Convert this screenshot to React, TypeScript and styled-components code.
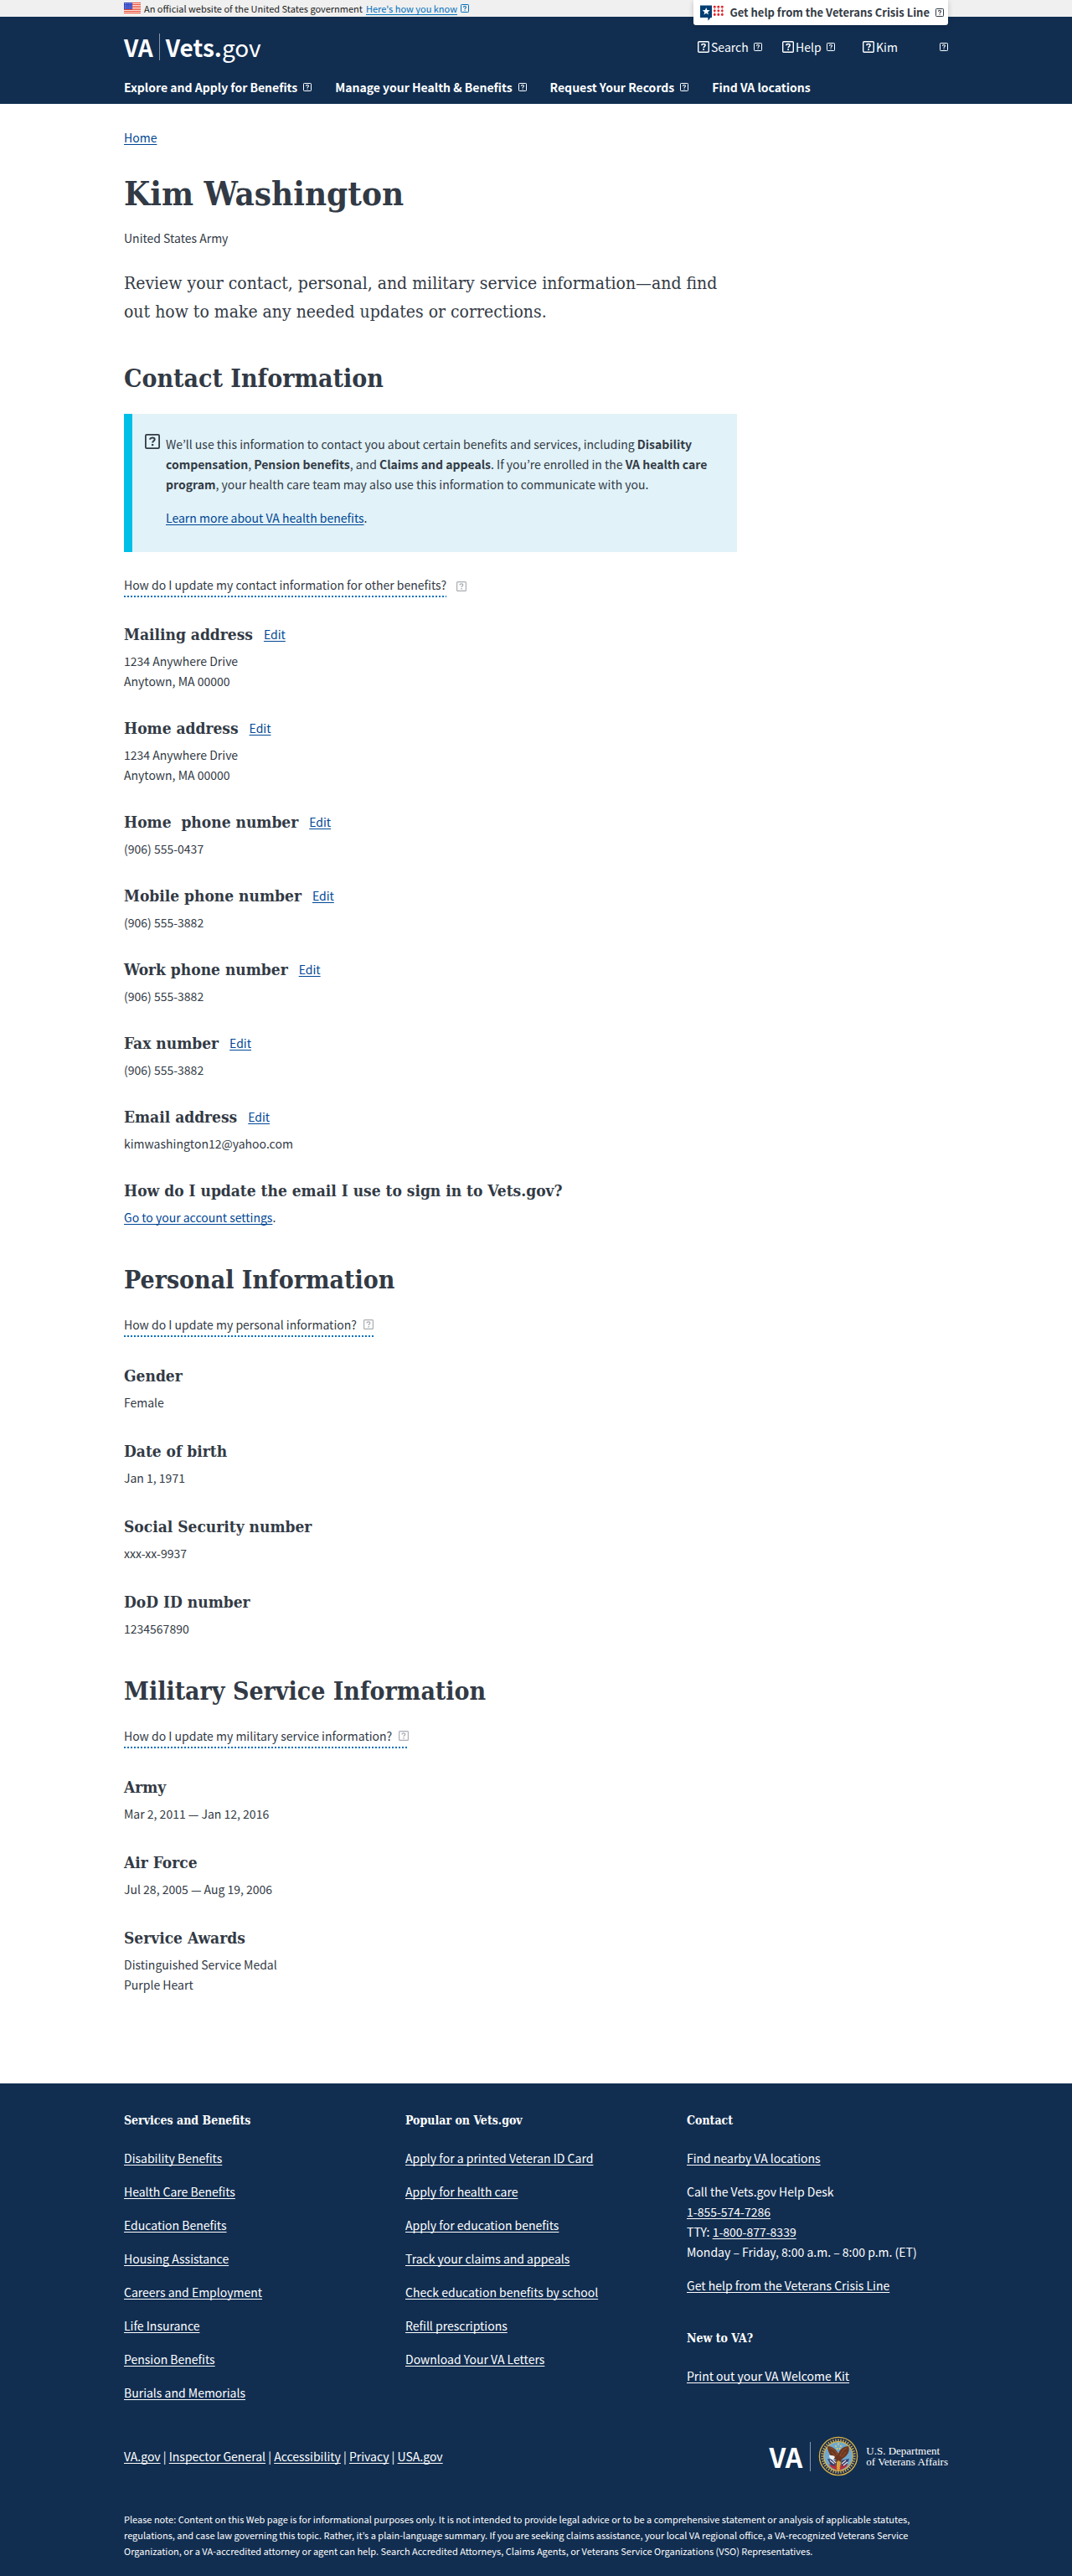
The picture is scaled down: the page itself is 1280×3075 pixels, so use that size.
import React from "react";
import styled, { createGlobalStyle, css } from "styled-components";

const sans = `"Noto Sans CJK JP", "Noto Sans CJK SC", "Open Sans", sans-serif`;
const slab = `"DejaVu Serif Condensed", "DejaVu Serif", serif`;
const navy = "#112e51";
const ink = "#323a45";
const linkBlue = "#004795";

const GlobalStyle = createGlobalStyle`
  *, *::before, *::after { box-sizing: border-box; }
  body {
    margin: 0;
    background: #fff;
    color: ${ink};
    font: 14px/24px ${sans};
  }
  h1, h2, h3, h4, p, ul { margin: 0; padding: 0; }
  ul { list-style: none; }
  button { border: 0; background: none; padding: 0; font: inherit; color: inherit; cursor: pointer; }
`;

const Container = styled.div`
  position: relative;
  max-width: 1024px;
  margin: 0 auto;
  padding: 0 20px;
`;

const Link = styled.a<{ $color?: string }>`
  color: ${(p) => p.$color ?? linkBlue};
  text-decoration: underline;
  text-decoration-thickness: 1px;
  text-underline-offset: 2px;
  text-decoration-skip-ink: none;
`;

/* ---------- icons ---------- */

const IconSvg = styled.svg`
  display: block;
  flex: none;
`;

function BoxIcon({ size = 10 }: { size?: number }) {
  return (
    <IconSvg width={size} height={size} viewBox="0 0 20 20" fill="none" stroke="currentColor" aria-hidden="true">
      <rect x="1" y="1" width="18" height="18" rx="1.5" strokeWidth="2" />
      <path d="M7 7.6V6.2C7.8 5.3 8.8 4.9 10 4.9c1.8 0 3 .9 3 2.3 0 2-2.8 2-2.8 4.6" strokeWidth="2.2" />
      <path d="M8.9 14.5h2.5" strokeWidth="2.4" />
    </IconSvg>
  );
}

function FlagIcon() {
  return (
    <IconSvg width="20" height="14" viewBox="0 0 20 14" aria-hidden="true">
      <rect width="20" height="14" fill="#fff" />
      {[0, 2, 4, 6, 8, 10, 12].map((y) => (
        <rect key={y} y={y} width="20" height="1.1" fill="#e8492f" />
      ))}
      <rect width="10" height="8" fill="#2a3fc0" />
      {[1.5, 4, 6.5].map((y) =>
        [1.5, 3.8, 6.1, 8.4].map((x) => <circle key={`${x}-${y}`} cx={x} cy={y} r="0.55" fill="#fff" />)
      )}
    </IconSvg>
  );
}

function CrisisIcon() {
  return (
    <IconSvg width="28" height="19" viewBox="0 0 28 19" aria-hidden="true">
      <path d="M0 .5h14V15h-1.5L9.5 18.7 9.3 15H0z" fill="#003e73" />
      <path d="M7.2 3l1.2 3.1 3.3.2-2.6 2.1.9 3.2-2.8-1.8-2.8 1.8.9-3.2-2.6-2.1 3.3-.2z" fill="#fff" />
      {[2.2, 6.8, 11.5].map((y) =>
        [17.3, 21.8, 26.3].map((x) => <circle key={`${x}-${y}`} cx={x} cy={y} r="1.4" fill="#e31c24" />)
      )}
      {[4.5, 9.1].map((y) =>
        [17.3, 21.8, 26.3].map((x) => <circle key={`${x}-${y}`} cx={x} cy={y} r=".5" fill="#e31c24" />)
      )}
    </IconSvg>
  );
}

function SealIcon() {
  const ticks = Array.from({ length: 40 }, (_, i) => i * 9);
  return (
    <IconSvg width="48" height="48" viewBox="0 0 48 48" role="img" aria-label="Department seal">
      <circle cx="24" cy="24" r="23.5" fill="#1b2a4a" />
      <circle cx="24" cy="24" r="22.6" fill="none" stroke="#d9b548" strokeWidth="1.3" />
      {ticks.map((a) => (
        <path key={a} d="M24 3.3v2.7" stroke="#cdb56a" strokeWidth="1.3" transform={`rotate(${a} 24 24)`} />
      ))}
      <circle cx="24" cy="24" r="17.3" fill="#6fa9cf" stroke="#d9b548" strokeWidth="1.2" />
      <path d="M11 27l10 2 2 7-7 1z" fill="#34406f" />
      <path d="M37 27l-9 2-2 7 7 1z" fill="#34406f" />
      <path d="M12 33c3 5 7 7 12 8 5-1 9-3 12-8-3 2-7 3-12 3s-9-1-12-3z" fill="#b5323c" />
      <path d="M14 29l5 4M17 28l4 4M33 29l-5 4M35 31l-5 4" stroke="#f1e9e2" strokeWidth="1.1" />
      <path d="M11 12c5 0 10 3 13 9 2-6 7-9 12-9 2 5 0 9-3 12l-5 4-2 6h-4l-1-6c-6-3-10-9-10-16z" fill="#6d3720" />
      <path d="M14 14c4 1 7 4 9 9M34 14c-4 2-6 5-8 10M16 19l5 5M33 19l-5 6" stroke="#9c5b35" strokeWidth=".8" fill="none" />
      <path d="M13 23c3 0 6 0 7 2l-2 3c-3 0-5-2-5-5z" fill="#eef2f5" />
      <path d="M22 31l2-2 3 2-1 8-2 3-2-3z" fill="#d8a334" />
      <path d="M20 33l2 5M28 33l-2 5" stroke="#c33b3f" strokeWidth="1.2" />
      {[[24, 9.5], [21, 12], [27, 12], [22.5, 15], [25.7, 15]].map(([x, y]) => (
        <circle key={`${x}-${y}`} cx={x} cy={y} r="1" fill="#e9d35a" />
      ))}
    </IconSvg>
  );
}

/* ---------- banner and header ---------- */

const Banner = styled.div`
  background: #f0f0f0;
  color: #212121;
  font-size: 11px;
  line-height: 20px;
`;

const BannerRow = styled.div`
  display: flex;
  align-items: center;
  gap: 4px;
`;

const BannerMore = styled.span`
  display: flex;
  align-items: center;
  gap: 4px;
  color: #0071bc;
`;

const CrisisTab = styled.button`
  && {
    position: absolute;
    top: 0;
    right: 20px;
    z-index: 1;
    display: flex;
    align-items: center;
    gap: 7px;
    height: 30px;
    padding: 0 5px 0 8px;
    background: #fff;
    color: ${ink};
    border-radius: 0 0 3px 3px;
    box-shadow: 0 2px 6px rgba(0, 0, 0, 0.2);
    font-weight: 700;
    font-size: 13px;
    line-height: 30px;
  }
`;

const Header = styled.header`
  background: ${navy};
  color: #fff;
`;

const HeaderTop = styled.div`
  display: flex;
  justify-content: space-between;
  align-items: center;
  height: 72px;
`;

const Logo = styled.a`
  display: flex;
  align-items: center;
  gap: 7px;
  color: #fff;
  text-decoration: none;
  font-size: 28px;
  line-height: 28px;
  font-weight: 700;
`;

const LogoRule = styled.span<{ $height: number }>`
  width: 1px;
  height: ${(p) => p.$height}px;
  background: #8896a8;
`;

const Thin = styled.span`
  font-weight: 400;
`;

const Tools = styled.div`
  display: flex;
  align-items: center;
`;

const Tool = styled.button<{ $width: number; $spread?: boolean }>`
  && {
    display: flex;
    align-items: center;
    gap: 2px;
    width: ${(p) => p.$width}px;
    ${(p) =>
      p.$spread &&
      css`
        & > :last-child {
          margin-left: auto;
        }
      `}
  }
`;

const ToolLabel = styled.span`
  margin-right: 4px;
`;

const Nav = styled.nav`
  display: flex;
  align-items: center;
  gap: 28px;
  padding-bottom: 8px;
`;

const NavItem = styled.button`
  && {
    display: flex;
    align-items: center;
    gap: 7px;
    font-weight: 700;
  }
`;

const NavLink = styled.a`
  color: #fff;
  font-weight: 700;
  text-decoration: none;
`;

/* ---------- main content ---------- */

const Main = styled.main`
  padding: 28px 0 106px;
`;

const Column = styled.div`
  max-width: 732px;
`;

const Title = styled.h1`
  margin-top: 31px;
  font: 700 40px/48px ${slab};
`;

const Branch = styled.p`
  margin-top: 17px;
`;

const Intro = styled.p`
  margin-top: 25px;
  font: 400 21px/34px ${slab};
`;

const SectionTitle = styled.h2`
  margin-top: 43px;
  font: 700 30px/40px ${slab};
`;

const Alert = styled.div`
  display: flex;
  gap: 7px;
  margin-top: 22px;
  padding: 24px 20px 29px 15px;
  border-left: 10px solid #00bfe7;
  background: #e1f2f8;
`;

const AlertBody = styled.div`
  display: grid;
  gap: 16px;
`;

const PromptRow = styled.div`
  display: flex;
  align-items: center;
  margin-top: 21px;

  ${Alert} + & {
    margin-top: 27px;
  }
`;

const Prompt = styled.button`
  && {
    display: flex;
    align-items: center;
    gap: 8px;
    padding-bottom: 3px;
    background: repeating-linear-gradient(90deg, #0071bc 0 2px, transparent 2px 4px) left bottom / 100% 2px no-repeat;
  }
`;

const Faint = styled.span`
  color: #a9adb3;
`;

const OutsideFaint = styled(Faint)`
  margin-left: 12px;
`;

const Fields = styled.div<{ $gap: number }>`
  display: grid;
  gap: ${(p) => p.$gap}px;
  margin-top: ${(p) => p.$gap}px;
`;

const FieldHead = styled.div`
  display: flex;
  align-items: center;
  gap: 13px;
  margin-bottom: 5px;
`;

const FieldTitle = styled.h3`
  font: 700 19px/30px ${slab};
  white-space: pre-wrap;
`;

type FieldProps = { title: string; lines: React.ReactNode[]; edit?: boolean };

function Field({ title, lines, edit }: FieldProps) {
  return (
    <div>
      <FieldHead>
        <FieldTitle>{title}</FieldTitle>
        {edit && <Link href="#edit">Edit</Link>}
      </FieldHead>
      {lines.map((l, i) => (
        <p key={i}>{l}</p>
      ))}
    </div>
  );
}

/* ---------- footer ---------- */

const Footer = styled.footer`
  padding: 32px 0 20px;
  background: ${navy};
  color: #fff;
`;

const FooterGrid = styled.div`
  display: grid;
  grid-template-columns: repeat(3, 1fr);
  gap: 24px;
`;

const FooterTitle = styled.h4`
  margin-bottom: 21px;
  font: 700 14px/24px ${slab};
`;

const FooterList = styled.ul`
  display: grid;
  gap: 16px;

  & + ${FooterTitle} {
    margin-top: 39px;
  }
`;

const FooterBottom = styled.div`
  display: flex;
  justify-content: space-between;
  align-items: center;
  margin-top: 40px;
`;

const Department = styled.div`
  display: flex;
  align-items: center;
  gap: 9px;
`;

const DepartmentMark = styled.span`
  font-size: 32px;
  line-height: 48px;
  font-weight: 700;
`;

const DepartmentName = styled.span`
  font: 400 13px/13px "Liberation Serif", serif;
`;

const Note = styled.p`
  margin-top: 42px;
  font-size: 11px;
  line-height: 19px;
`;

const contact: FieldProps[] = [
  { title: "Mailing address", lines: ["1234 Anywhere Drive", "Anytown, MA 00000"], edit: true },
  { title: "Home address", lines: ["1234 Anywhere Drive", "Anytown, MA 00000"], edit: true },
  { title: "Home  phone number", lines: ["(906) 555-0437"], edit: true },
  { title: "Mobile phone number", lines: ["(906) 555-3882"], edit: true },
  { title: "Work phone number", lines: ["(906) 555-3882"], edit: true },
  { title: "Fax number", lines: ["(906) 555-3882"], edit: true },
  { title: "Email address", lines: ["kimwashington12@yahoo.com"], edit: true },
  {
    title: "How do I update the email I use to sign in to Vets.gov?",
    lines: [
      <>
        <Link href="#settings">Go to your account settings</Link>.
      </>,
    ],
  },
];

const personal: FieldProps[] = [
  { title: "Gender", lines: ["Female"] },
  { title: "Date of birth", lines: ["Jan 1, 1971"] },
  { title: "Social Security number", lines: ["xxx-xx-9937"] },
  { title: "DoD ID number", lines: ["1234567890"] },
];

const military: FieldProps[] = [
  { title: "Army", lines: ["Mar 2, 2011 — Jan 12, 2016"] },
  { title: "Air Force", lines: ["Jul 28, 2005 — Aug 19, 2006"] },
  { title: "Service Awards", lines: ["Distinguished Service Medal", "Purple Heart"] },
];

const services = [
  "Disability Benefits",
  "Health Care Benefits",
  "Education Benefits",
  "Housing Assistance",
  "Careers and Employment",
  "Life Insurance",
  "Pension Benefits",
  "Burials and Memorials",
];

const popular = [
  "Apply for a printed Veteran ID Card",
  "Apply for health care",
  "Apply for education benefits",
  "Track your claims and appeals",
  "Check education benefits by school",
  "Refill prescriptions",
  "Download Your VA Letters",
];

const siteLinks = ["VA.gov", "Inspector General", "Accessibility", "Privacy", "USA.gov"];

function FooterLink({ children }: { children: React.ReactNode }) {
  return (
    <Link href="#" $color="#fff">
      {children}
    </Link>
  );
}

function LinkColumn({ title, items }: { title: string; items: string[] }) {
  return (
    <div>
      <FooterTitle>{title}</FooterTitle>
      <FooterList>
        {items.map((t) => (
          <li key={t}>
            <FooterLink>{t}</FooterLink>
          </li>
        ))}
      </FooterList>
    </div>
  );
}

function FieldGroup({ items, gap }: { items: FieldProps[]; gap: number }) {
  return (
    <Fields $gap={gap}>
      {items.map((f) => (
        <Field key={f.title} {...f} />
      ))}
    </Fields>
  );
}

export default function App() {
  return (
    <>
      <GlobalStyle />
      <Banner>
        <Container>
          <BannerRow>
            <FlagIcon />
            <span>An official website of the United States government</span>
            <BannerMore>
              <Link href="#official" $color="#0071bc">
                Here's how you know
              </Link>
              <BoxIcon />
            </BannerMore>
          </BannerRow>
          <CrisisTab type="button">
            <CrisisIcon />
            Get help from the Veterans Crisis Line
            <BoxIcon />
          </CrisisTab>
        </Container>
      </Banner>

      <Header>
        <Container>
          <HeaderTop>
            <Logo href="#home">
              <span>VA</span>
              <LogoRule $height={32} />
              <span>
                Vets.<Thin>gov</Thin>
              </span>
            </Logo>
            <Tools>
              <Tool type="button" $width={101}>
                <BoxIcon size={14} />
                <ToolLabel>Search</ToolLabel>
                <BoxIcon />
              </Tool>
              <Tool type="button" $width={96}>
                <BoxIcon size={14} />
                <ToolLabel>Help</ToolLabel>
                <BoxIcon />
              </Tool>
              <Tool type="button" $width={102} $spread>
                <BoxIcon size={14} />
                <ToolLabel>Kim</ToolLabel>
                <BoxIcon />
              </Tool>
            </Tools>
          </HeaderTop>
          <Nav>
            {["Explore and Apply for Benefits", "Manage your Health & Benefits", "Request Your Records"].map((t) => (
              <NavItem type="button" key={t}>
                {t}
                <BoxIcon />
              </NavItem>
            ))}
            <NavLink href="#locations">Find VA locations</NavLink>
          </Nav>
        </Container>
      </Header>

      <Main>
        <Container>
          <Column>
            <Link href="#home">Home</Link>
            <Title>Kim Washington</Title>
            <Branch>United States Army</Branch>
            <Intro>
              Review your contact, personal, and military service information—and find out how to make any needed
              updates or corrections.
            </Intro>

            <SectionTitle>Contact Information</SectionTitle>
            <Alert>
              <BoxIcon size={18} />
              <AlertBody>
                <p>
                  We’ll use this information to contact you about certain benefits and services, including{" "}
                  <b>Disability compensation</b>, <b>Pension benefits</b>, and <b>Claims and appeals</b>. If you’re
                  enrolled in the <b>VA health care program</b>, your health care team may also use this information to
                  communicate with you.
                </p>
                <p>
                  <Link href="#benefits">Learn more about VA health benefits</Link>.
                </p>
              </AlertBody>
            </Alert>
            <PromptRow>
              <Prompt type="button">How do I update my contact information for other benefits?</Prompt>
              <OutsideFaint>
                <BoxIcon size={12} />
              </OutsideFaint>
            </PromptRow>
            <FieldGroup items={contact} gap={29} />

            <SectionTitle>Personal Information</SectionTitle>
            <PromptRow>
              <Prompt type="button">
                How do I update my personal information?
                <Faint>
                  <BoxIcon size={12} />
                </Faint>
              </Prompt>
            </PromptRow>
            <FieldGroup items={personal} gap={31} />

            <SectionTitle>Military Service Information</SectionTitle>
            <PromptRow>
              <Prompt type="button">
                How do I update my military service information?
                <Faint>
                  <BoxIcon size={12} />
                </Faint>
              </Prompt>
            </PromptRow>
            <FieldGroup items={military} gap={31} />
          </Column>
        </Container>
      </Main>

      <Footer>
        <Container>
          <FooterGrid>
            <LinkColumn title="Services and Benefits" items={services} />
            <LinkColumn title="Popular on Vets.gov" items={popular} />
            <div>
              <FooterTitle>Contact</FooterTitle>
              <FooterList>
                <li>
                  <FooterLink>Find nearby VA locations</FooterLink>
                </li>
                <li>
                  Call the Vets.gov Help Desk
                  <br />
                  <FooterLink>1-855-574-7286</FooterLink>
                  <br />
                  TTY: <FooterLink>1-800-877-8339</FooterLink>
                  <br />
                  Monday – Friday, 8:00 a.m. – 8:00 p.m. (ET)
                </li>
                <li>
                  <FooterLink>Get help from the Veterans Crisis Line</FooterLink>
                </li>
              </FooterList>
              <FooterTitle>New to VA?</FooterTitle>
              <FooterList>
                <li>
                  <FooterLink>Print out your VA Welcome Kit</FooterLink>
                </li>
              </FooterList>
            </div>
          </FooterGrid>
          <FooterBottom>
            <div>
              {siteLinks.map((t, i) => (
                <React.Fragment key={t}>
                  {i > 0 && " | "}
                  <FooterLink>{t}</FooterLink>
                </React.Fragment>
              ))}
            </div>
            <Department>
              <DepartmentMark>VA</DepartmentMark>
              <LogoRule $height={35} />
              <SealIcon />
              <DepartmentName>
                U.S. Department
                <br />
                of Veterans Affairs
              </DepartmentName>
            </Department>
          </FooterBottom>
          <Note>
            Please note: Content on this Web page is for informational purposes only. It is not intended to provide
            legal advice or to be a comprehensive statement or analysis of applicable statutes, regulations, and case
            law governing this topic. Rather, it’s a plain-language summary. If you are seeking claims assistance, your
            local VA regional office, a VA-recognized Veterans Service Organization, or a VA-accredited attorney or
            agent can help. Search Accredited Attorneys, Claims Agents, or Veterans Service Organizations (VSO)
            Representatives.
          </Note>
        </Container>
      </Footer>
    </>
  );
}
